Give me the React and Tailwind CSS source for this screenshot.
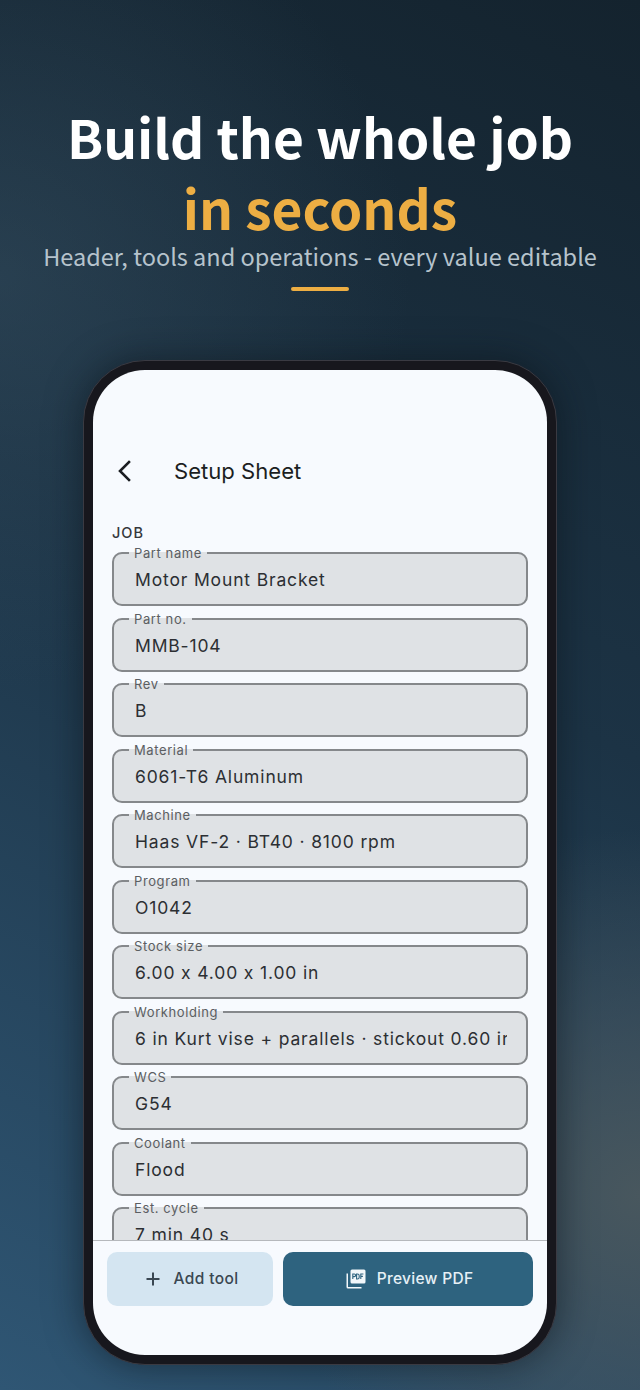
const fields = [
  ['Part name', 'Motor Mount Bracket'],
  ['Part no.', 'MMB-104'],
  ['Rev', 'B'],
  ['Material', '6061-T6 Aluminum'],
  ['Machine', 'Haas VF-2 · BT40 · 8100 rpm'],
  ['Program', 'O1042'],
  ['Stock size', '6.00 x 4.00 x 1.00 in'],
  ['Workholding', '6 in Kurt vise + parallels · stickout 0.60 in'],
  ['WCS', 'G54'],
  ['Coolant', 'Flood'],
  ['Est. cycle', '7 min 40 s'],
];

function Field({ label, value }) {
  return (
    <fieldset className="relative m-0 h-[57px] min-w-0 shrink-0 rounded-[10px] border-2 border-[#85888b] bg-[#dfe2e5] pl-[21px] pr-[19px]">
      <legend className="-ml-[6px] h-[8px] px-[5px] text-[13px] leading-[8px] tracking-[0.6px] text-[#5b5e62]">
        {label}
      </legend>
      <div className="mt-[10px] overflow-hidden whitespace-nowrap text-[17.5px] leading-[26px] tracking-[0.85px] text-[#2c2f33]">
        {value}
      </div>
    </fieldset>
  );
}

export default function App() {
  return (
    <div className="relative flex h-[1390px] w-[640px] flex-col items-center overflow-hidden bg-[#1b2e3d] [font-family:Inter,sans-serif]">
      <div className="absolute inset-0 bg-[linear-gradient(205deg,#14232e_0%,#1c3345_45%,#2f5674_100%)]" />
      <div className="absolute inset-0 bg-[radial-gradient(circle_at_0%_20%,rgba(62,88,106,0.4)_0%,rgba(62,88,106,0)_32%)]" />
      <div className="absolute inset-0 bg-[radial-gradient(circle_at_100%_86%,rgba(74,88,94,0.95)_0%,rgba(74,88,96,0.55)_12%,rgba(74,90,98,0)_27%)]" />

      <div className="relative flex flex-col items-center pt-[100px] [font-family:'Noto_Sans_CJK_SC',sans-serif]">
        <h1 className="text-[53.25px] leading-[71px] font-bold text-white">Build the whole job</h1>
        <h1 className="text-[53.25px] leading-[71px] font-bold text-[#edae43]">in seconds</h1>
        <p className="mt-[-4px] text-[23.5px] leading-[36px] text-[#b6c3cc]">
          Header, tools and operations - every value editable
        </p>
        <div className="mt-[13px] h-[4px] w-[58px] rounded-full bg-[#edae43]" />
      </div>

      <div className="relative mt-[69px] h-[1005px] w-[474px] rounded-[62px] border border-[#3a3a42] bg-[#17171d] p-[9px] shadow-[0_0_36px_rgba(10,16,22,0.55)]">
        <div className="flex h-full w-full flex-col overflow-hidden rounded-[52px] bg-[#f7fafe]">
          <div className="flex h-[870px] shrink-0 flex-col overflow-hidden">
            <div className="flex items-center pl-[19px] pt-[85px]">
              <svg width="24" height="24" viewBox="0 0 24 24" fill="none" stroke="#1b1e22" strokeWidth="2.6" strokeLinecap="square">
                <path d="M17 3 L8 12 L17 21" />
              </svg>
              <span className="ml-[38px] text-[22.1px] leading-[32px] text-[#1b1e22]">Setup Sheet</span>
            </div>
            <div className="mt-[36px] pl-[19px] text-[14.5px] leading-[20px] font-medium tracking-[1px] text-[#34373b]">JOB</div>
            <div className="mt-[6px] flex flex-col gap-[8.5px] px-[19px]">
              {fields.map(([label, value]) => (
                <Field key={label} label={label} value={value} />
              ))}
            </div>
          </div>

          <div className="flex gap-[10px] border-t border-[#b5b8bc] px-[14px] pt-[11px]">
            <button className="flex h-[54px] w-[166px] items-center justify-center gap-[12px] rounded-[10px] bg-[#d4e5f1] pl-[4px] text-[15.5px] font-medium tracking-[0.4px] text-[#3a4752]">
              <svg width="16" height="16" viewBox="0 0 16 16" fill="none" stroke="#3a4752" strokeWidth="2">
                <path d="M8 1.5 V14.5 M1.5 8 H14.5" />
              </svg>
              Add tool
            </button>
            <button className="flex h-[54px] flex-1 items-center justify-center gap-[11px] rounded-[10px] bg-[#2e637f] pl-[3px] text-[15.5px] font-medium tracking-[0.3px] text-[#e6f0f6]">
              <svg width="20" height="20" viewBox="0 0 20 20">
                <path fill="#f2f7fa" d="M6 0.5 H18 A1.5 1.5 0 0 1 19.5 2 V13 A1.5 1.5 0 0 1 18 14.5 H6 A1.5 1.5 0 0 1 4.5 13 V2 A1.5 1.5 0 0 1 6 0.5 Z" />
                <path fill="#f2f7fa" d="M0.5 4.5 H2 V18 H15.5 V19.5 H2 A1.5 1.5 0 0 1 0.5 18 Z" />
                <path fill="none" stroke="#2e637f" strokeWidth="1.1" d="M6.8 10 V5 H8.3 A1.3 1.3 0 0 1 8.3 7.6 H6.8 M10.6 5 V10 H11.4 A1.8 1.8 0 0 0 13.2 8.2 V6.8 A1.8 1.8 0 0 0 11.4 5 Z M14.8 10 V5 H17.4 M14.8 7.4 H16.9" />
              </svg>
              Preview PDF
            </button>
          </div>
        </div>
      </div>
    </div>
  );
}
